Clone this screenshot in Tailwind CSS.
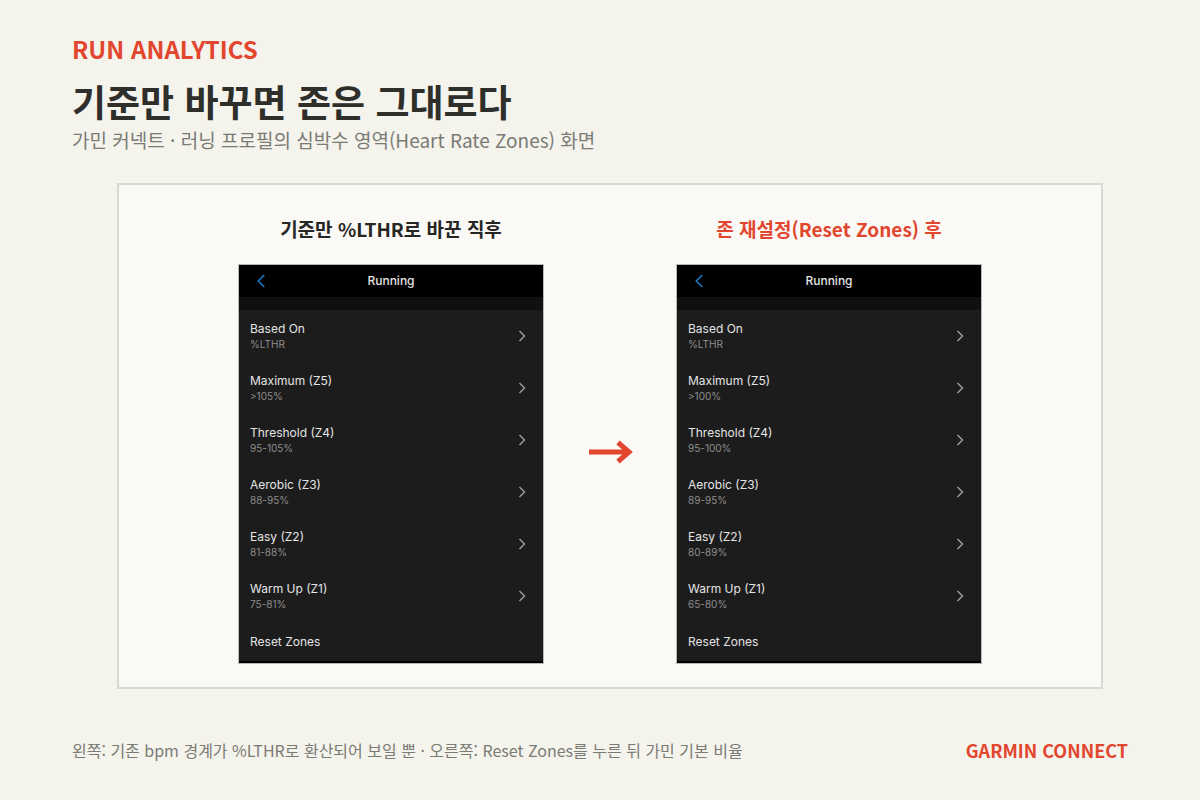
<!DOCTYPE html>
<html lang="ko">
<head>
    <meta charset="UTF-8">
    <meta name="viewport" content="width=device-width, initial-scale=1.0">
    <title>Run Analytics - Heart Rate Zones</title>
    <script src="https://cdn.jsdelivr.net/npm/@tailwindcss/browser@4"></script>
</head>
<body class="bg-[#f4f3ec] text-[#2e2e2b] font-['Noto_Sans_CJK_KR',sans-serif]">
    <div class="min-h-screen flex flex-col px-[72px] pt-8 pb-[34px]">
        <!-- Header -->
        <header>
            <p class="text-2xl leading-[34px] font-bold text-[#e2462e]">RUN ANALYTICS</p>
            <h1 class="mt-2 text-[37px] leading-[54px] font-bold">기준만 바꾸면 존은 그대로다</h1>
            <p class="text-[19px] leading-6 text-[#7b7b75]">가민 커넥트 · 러닝 프로필의 심박수 영역(Heart Rate Zones) 화면</p>
        </header>

        <!-- Before / after comparison -->
        <main class="mt-[31px] ml-[45px] mr-[25px] border-2 border-[#d9d8d1] bg-[#fbf9f5] pt-7 pb-[23px] flex justify-center">
            <section class="w-[306px]">
                <h2 class="h-8 mb-[19px] text-center text-[19px] leading-8 font-bold text-[#262624]">기준만 %LTHR로 바꾼 직후</h2>
                <div class="border border-[#b9b8b4] bg-[#1c1c1c] text-[#e4e4e4] font-[Inter,sans-serif]">
                    <div class="h-8 bg-black grid grid-cols-[44px_1fr_44px] items-center">
                        <button type="button" aria-label="Back" class="justify-self-center text-[#1c7cc9]">
                            <svg class="block w-3 h-4" viewBox="0 0 12 16" fill="none" stroke="currentColor" stroke-width="1.5"><path d="M9.3 2 3.2 8l6.1 6"/></svg>
                        </button>
                        <h3 class="text-center text-xs font-medium">Running</h3>
                    </div>
                    <div class="h-[13px] bg-[#101010]"></div>
                    <button type="button" class="w-full h-[52px] pl-[11px] pr-[15px] flex items-center justify-between text-left">
                        <span><span class="block text-xs leading-4">Based On</span><span class="block text-[10px] leading-[14px] text-[#8e8e8e]">%LTHR</span></span>
                        <svg class="w-3 h-4" viewBox="0 0 12 16" fill="none" stroke="#a0a0a0" stroke-width="1.4"><path d="m3.5 3 5 5-5 5"/></svg>
                    </button>
                    <button type="button" class="w-full h-[52px] pl-[11px] pr-[15px] flex items-center justify-between text-left">
                        <span><span class="block text-xs leading-4">Maximum (Z5)</span><span class="block text-[10px] leading-[14px] text-[#8e8e8e]">&gt;105%</span></span>
                        <svg class="w-3 h-4" viewBox="0 0 12 16" fill="none" stroke="#a0a0a0" stroke-width="1.4"><path d="m3.5 3 5 5-5 5"/></svg>
                    </button>
                    <button type="button" class="w-full h-[52px] pl-[11px] pr-[15px] flex items-center justify-between text-left">
                        <span><span class="block text-xs leading-4">Threshold (Z4)</span><span class="block text-[10px] leading-[14px] text-[#8e8e8e]">95-105%</span></span>
                        <svg class="w-3 h-4" viewBox="0 0 12 16" fill="none" stroke="#a0a0a0" stroke-width="1.4"><path d="m3.5 3 5 5-5 5"/></svg>
                    </button>
                    <button type="button" class="w-full h-[52px] pl-[11px] pr-[15px] flex items-center justify-between text-left">
                        <span><span class="block text-xs leading-4">Aerobic (Z3)</span><span class="block text-[10px] leading-[14px] text-[#8e8e8e]">88-95%</span></span>
                        <svg class="w-3 h-4" viewBox="0 0 12 16" fill="none" stroke="#a0a0a0" stroke-width="1.4"><path d="m3.5 3 5 5-5 5"/></svg>
                    </button>
                    <button type="button" class="w-full h-[52px] pl-[11px] pr-[15px] flex items-center justify-between text-left">
                        <span><span class="block text-xs leading-4">Easy (Z2)</span><span class="block text-[10px] leading-[14px] text-[#8e8e8e]">81-88%</span></span>
                        <svg class="w-3 h-4" viewBox="0 0 12 16" fill="none" stroke="#a0a0a0" stroke-width="1.4"><path d="m3.5 3 5 5-5 5"/></svg>
                    </button>
                    <button type="button" class="w-full h-[52px] pl-[11px] pr-[15px] flex items-center justify-between text-left">
                        <span><span class="block text-xs leading-4">Warm Up (Z1)</span><span class="block text-[10px] leading-[14px] text-[#8e8e8e]">75-81%</span></span>
                        <svg class="w-3 h-4" viewBox="0 0 12 16" fill="none" stroke="#a0a0a0" stroke-width="1.4"><path d="m3.5 3 5 5-5 5"/></svg>
                    </button>
                    <button type="button" class="block w-full h-[39px] pl-[11px] text-left text-xs">Reset Zones</button>
                    <div class="h-[2px] bg-black"></div>
                </div>
            </section>

            <!-- Arrow -->
            <div class="w-[132px] pt-[227px] flex justify-center">
                <svg class="w-12 h-6" viewBox="0 0 48 24" fill="none" stroke="#e2462e" stroke-width="5" aria-hidden="true"><path d="M3 12h40"/><path d="m32 2.5 11 9.5-11 9.5"/></svg>
            </div>

            <section class="w-[306px]">
                <h2 class="h-8 mb-[19px] text-center text-[19px] leading-8 font-bold text-[#e2462e]">존 재설정(Reset Zones) 후</h2>
                <div class="border border-[#b9b8b4] bg-[#1c1c1c] text-[#e4e4e4] font-[Inter,sans-serif]">
                    <div class="h-8 bg-black grid grid-cols-[44px_1fr_44px] items-center">
                        <button type="button" aria-label="Back" class="justify-self-center text-[#1c7cc9]">
                            <svg class="block w-3 h-4" viewBox="0 0 12 16" fill="none" stroke="currentColor" stroke-width="1.5"><path d="M9.3 2 3.2 8l6.1 6"/></svg>
                        </button>
                        <h3 class="text-center text-xs font-medium">Running</h3>
                    </div>
                    <div class="h-[13px] bg-[#101010]"></div>
                    <button type="button" class="w-full h-[52px] pl-[11px] pr-[15px] flex items-center justify-between text-left">
                        <span><span class="block text-xs leading-4">Based On</span><span class="block text-[10px] leading-[14px] text-[#8e8e8e]">%LTHR</span></span>
                        <svg class="w-3 h-4" viewBox="0 0 12 16" fill="none" stroke="#a0a0a0" stroke-width="1.4"><path d="m3.5 3 5 5-5 5"/></svg>
                    </button>
                    <button type="button" class="w-full h-[52px] pl-[11px] pr-[15px] flex items-center justify-between text-left">
                        <span><span class="block text-xs leading-4">Maximum (Z5)</span><span class="block text-[10px] leading-[14px] text-[#8e8e8e]">&gt;100%</span></span>
                        <svg class="w-3 h-4" viewBox="0 0 12 16" fill="none" stroke="#a0a0a0" stroke-width="1.4"><path d="m3.5 3 5 5-5 5"/></svg>
                    </button>
                    <button type="button" class="w-full h-[52px] pl-[11px] pr-[15px] flex items-center justify-between text-left">
                        <span><span class="block text-xs leading-4">Threshold (Z4)</span><span class="block text-[10px] leading-[14px] text-[#8e8e8e]">95-100%</span></span>
                        <svg class="w-3 h-4" viewBox="0 0 12 16" fill="none" stroke="#a0a0a0" stroke-width="1.4"><path d="m3.5 3 5 5-5 5"/></svg>
                    </button>
                    <button type="button" class="w-full h-[52px] pl-[11px] pr-[15px] flex items-center justify-between text-left">
                        <span><span class="block text-xs leading-4">Aerobic (Z3)</span><span class="block text-[10px] leading-[14px] text-[#8e8e8e]">89-95%</span></span>
                        <svg class="w-3 h-4" viewBox="0 0 12 16" fill="none" stroke="#a0a0a0" stroke-width="1.4"><path d="m3.5 3 5 5-5 5"/></svg>
                    </button>
                    <button type="button" class="w-full h-[52px] pl-[11px] pr-[15px] flex items-center justify-between text-left">
                        <span><span class="block text-xs leading-4">Easy (Z2)</span><span class="block text-[10px] leading-[14px] text-[#8e8e8e]">80-89%</span></span>
                        <svg class="w-3 h-4" viewBox="0 0 12 16" fill="none" stroke="#a0a0a0" stroke-width="1.4"><path d="m3.5 3 5 5-5 5"/></svg>
                    </button>
                    <button type="button" class="w-full h-[52px] pl-[11px] pr-[15px] flex items-center justify-between text-left">
                        <span><span class="block text-xs leading-4">Warm Up (Z1)</span><span class="block text-[10px] leading-[14px] text-[#8e8e8e]">65-80%</span></span>
                        <svg class="w-3 h-4" viewBox="0 0 12 16" fill="none" stroke="#a0a0a0" stroke-width="1.4"><path d="m3.5 3 5 5-5 5"/></svg>
                    </button>
                    <button type="button" class="block w-full h-[39px] pl-[11px] text-left text-xs">Reset Zones</button>
                    <div class="h-[2px] bg-black"></div>
                </div>
            </section>
        </main>

        <!-- Footer -->
        <footer class="mt-auto flex items-center justify-between">
            <p class="text-base leading-8 text-[#7b7b75]">왼쪽: 기존 bpm 경계가 %LTHR로 환산되어 보일 뿐 · 오른쪽: Reset Zones를 누른 뒤 가민 기본 비율</p>
            <p class="text-lg leading-8 font-bold text-[#e2462e]">GARMIN CONNECT</p>
        </footer>
    </div>
</body>
</html>
